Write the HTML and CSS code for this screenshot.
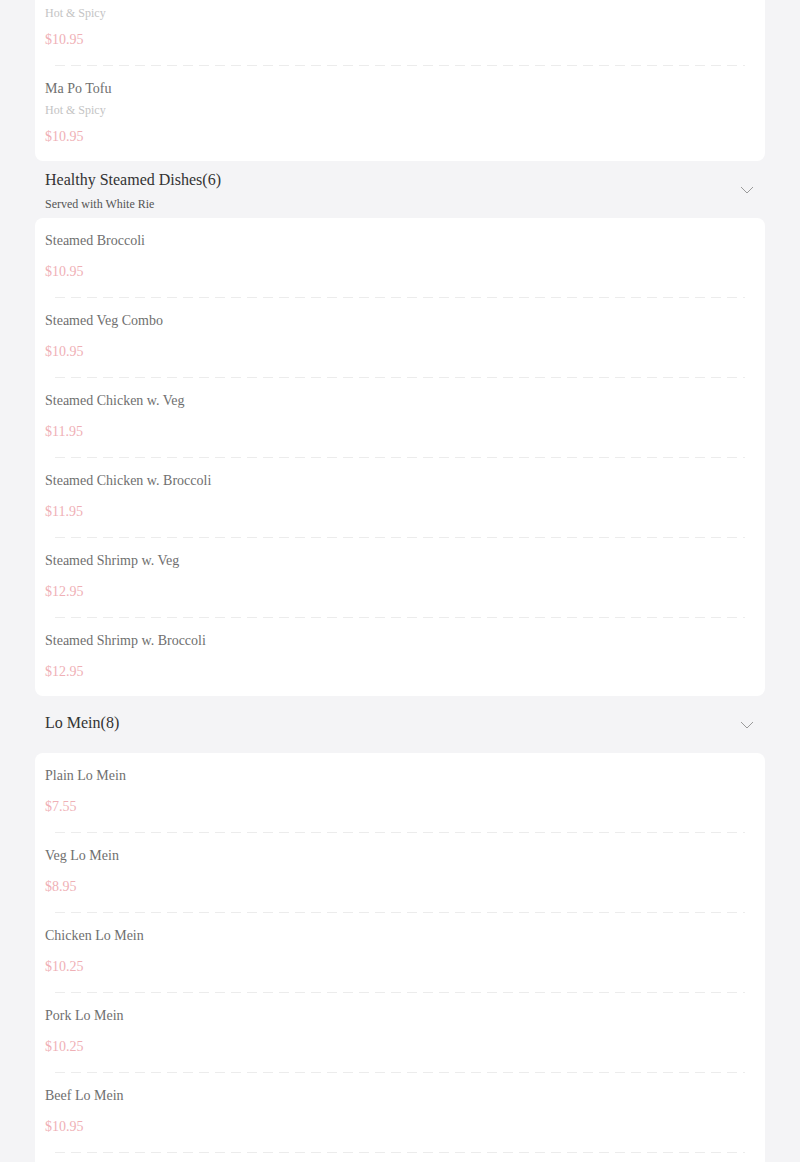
FILE: index.html
```html
<!DOCTYPE html>
<html>
<head>
<meta charset="utf-8">
<link rel="stylesheet" href="styles.css">
</head>
<body>
<div class="menu">
  <div class="card">
    <div class="item">
      <div class="name">Szechuan Tofu</div>
      <div class="desc">Hot &amp; Spicy</div>
      <div class="price">$10.95</div>
    </div>
    <div class="divider"></div>
    <div class="item">
      <div class="name">Ma Po Tofu</div>
      <div class="desc">Hot &amp; Spicy</div>
      <div class="price">$10.95</div>
    </div>
  </div>

  <div class="section-head">
    <div class="head-text">
      <div class="title">Healthy Steamed Dishes(6)</div>
      <div class="subtitle">Served with White Rie</div>
    </div>
    <svg class="chev" width="14" height="8" viewBox="0 0 14 8"><path d="M1 1 L7 7 L13 1" fill="none" stroke="#9a9a9a" stroke-width="1"/></svg>
  </div>
  <div class="card">
    <div class="item"><div class="name">Steamed Broccoli</div><div class="price">$10.95</div></div>
    <div class="divider"></div>
    <div class="item"><div class="name">Steamed Veg Combo</div><div class="price">$10.95</div></div>
    <div class="divider"></div>
    <div class="item"><div class="name">Steamed Chicken w. Veg</div><div class="price">$11.95</div></div>
    <div class="divider"></div>
    <div class="item"><div class="name">Steamed Chicken w. Broccoli</div><div class="price">$11.95</div></div>
    <div class="divider"></div>
    <div class="item"><div class="name">Steamed Shrimp w. Veg</div><div class="price">$12.95</div></div>
    <div class="divider"></div>
    <div class="item"><div class="name">Steamed Shrimp w. Broccoli</div><div class="price">$12.95</div></div>
  </div>

  <div class="section-head solo">
    <div class="head-text">
      <div class="title">Lo Mein(8)</div>
    </div>
    <svg class="chev" width="14" height="8" viewBox="0 0 14 8"><path d="M1 1 L7 7 L13 1" fill="none" stroke="#9a9a9a" stroke-width="1"/></svg>
  </div>
  <div class="card">
    <div class="item"><div class="name">Plain Lo Mein</div><div class="price">$7.55</div></div>
    <div class="divider"></div>
    <div class="item"><div class="name">Veg Lo Mein</div><div class="price">$8.95</div></div>
    <div class="divider"></div>
    <div class="item"><div class="name">Chicken Lo Mein</div><div class="price">$10.25</div></div>
    <div class="divider"></div>
    <div class="item"><div class="name">Pork Lo Mein</div><div class="price">$10.25</div></div>
    <div class="divider"></div>
    <div class="item"><div class="name">Beef Lo Mein</div><div class="price">$10.95</div></div>
    <div class="divider"></div>
    <div class="item"><div class="name">Shrimp Lo Mein</div><div class="price">$11.95</div></div>
  </div>
</div>
</body>
</html>
```

FILE: styles.css
```css
html, body {
  margin: 0;
  padding: 0;
  background: #f4f4f6;
  font-family: "Liberation Serif", "Times New Roman", serif;
}

.menu {
  margin: -31px 35px 0;
}

.card {
  background: #ffffff;
  border-radius: 8px;
  overflow: hidden;
}

.item {
  padding: 13px 10px 14px;
}

.name {
  font-size: 14px;
  line-height: 20px;
  color: #6f6f6f;
}

.desc {
  font-size: 12px;
  line-height: 16px;
  color: #c4c4c4;
  margin-top: 3px;
  margin-bottom: -2px;
}

.price {
  font-size: 14px;
  line-height: 20px;
  color: #efb0b6;
  margin-top: 11px;
}

.divider {
  height: 1px;
  margin: 1px 20px 0;
  background: repeating-linear-gradient(to right, #ececec 0 10px, transparent 10px 16px);
}

.section-head {
  height: 57px;
  box-sizing: border-box;
  padding: 9px 12px 0 10px;
  display: flex;
  align-items: flex-start;
  justify-content: space-between;
  position: relative;
}

.section-head.solo {
  padding-top: 17px;
}

.title {
  font-size: 16px;
  line-height: 20px;
  color: #333333;
}

.subtitle {
  font-size: 12px;
  line-height: 16px;
  color: #555555;
  margin-top: 6px;
}

.chev {
  position: absolute;
  right: 11px;
  top: 25px;
}
```
